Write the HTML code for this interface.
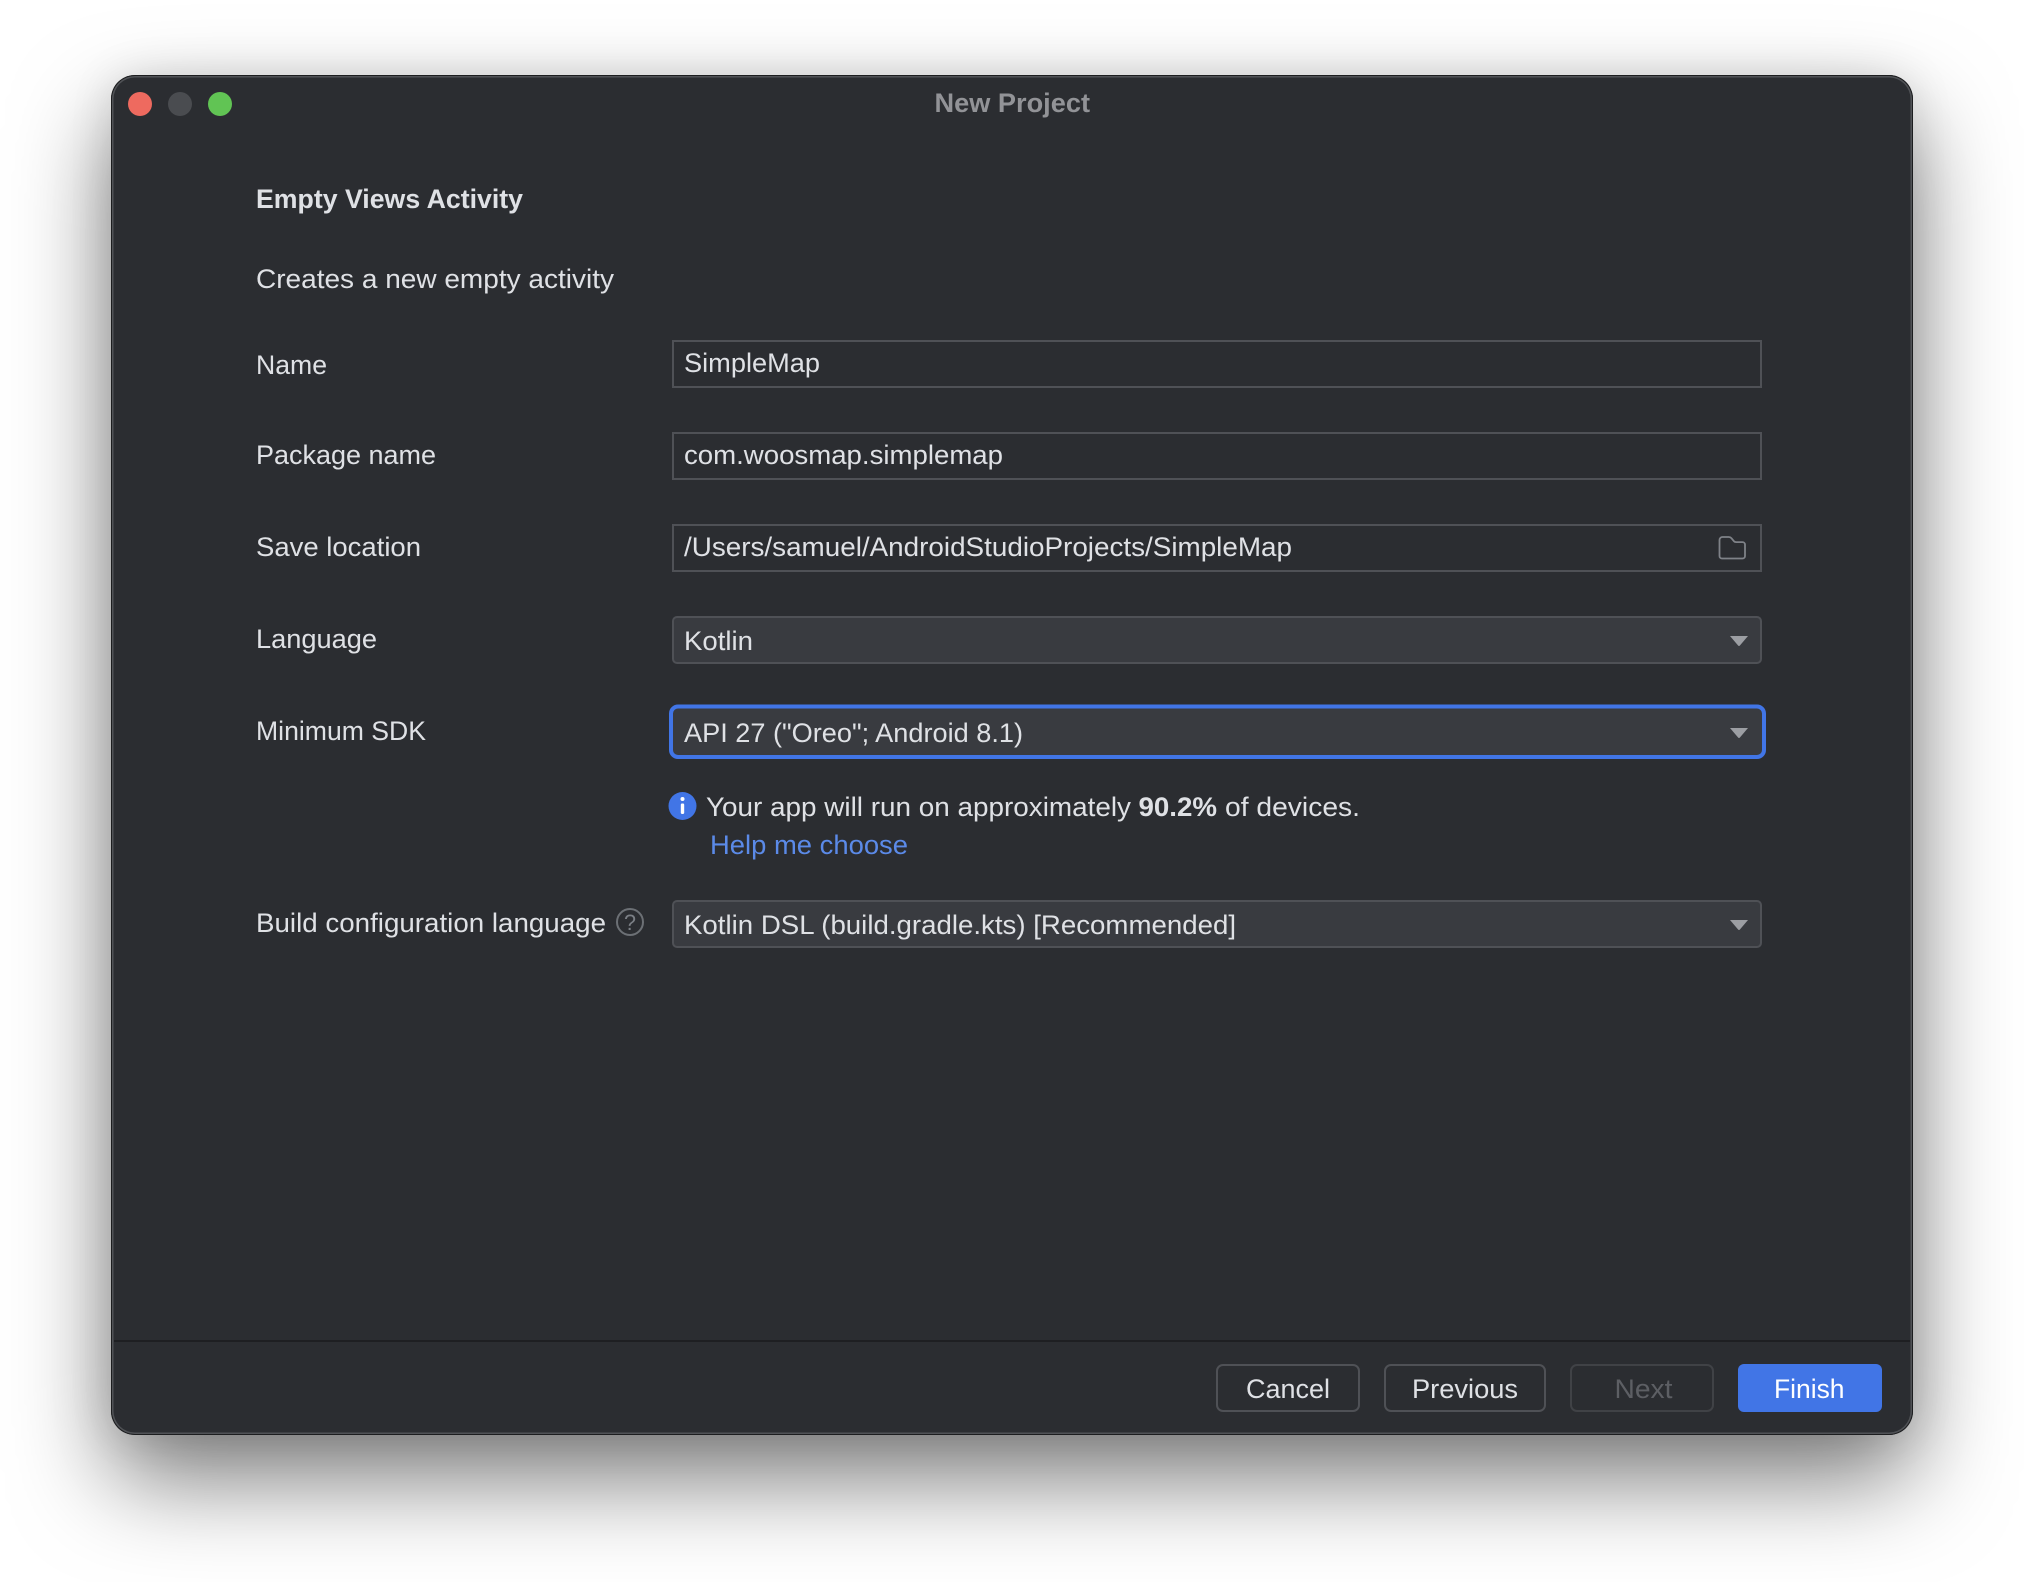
<!DOCTYPE html>
<html lang="en">
<head>
<meta charset="utf-8">
<title>New Project</title>
<style>
html,body{margin:0;padding:0;background:#fff;width:2024px;height:1582px;overflow:hidden}
.win{position:absolute;left:111px;top:75px;width:1802px;height:1360px;box-sizing:border-box;border-radius:24px;background:#2b2d31;
box-shadow:0 44px 96px rgba(0,0,0,.52),0 0 44px rgba(0,0,0,.1),inset 0 0 0 1px #1c1d1f,inset 0 0 0 2.5px #505256}
svg{position:absolute;left:0;top:0}
text{font-family:"Liberation Sans",sans-serif;font-size:27px;fill:#dfe1e5}
.b{font-weight:700}
</style>
</head>
<body>
<div class="win"></div>
<svg width="2024" height="1582" viewBox="0 0 2024 1582" xmlns="http://www.w3.org/2000/svg">
  <!-- traffic lights -->
  <ellipse cx="140" cy="104" rx="12" ry="12" fill="#ee6a5f"/>
  <ellipse cx="180" cy="104" rx="12" ry="12" fill="#4a4c50"/>
  <ellipse cx="220" cy="104" rx="12" ry="12" fill="#61c454"/>
  <text class="b" x="934.5" y="112" textLength="155.5" lengthAdjust="spacingAndGlyphs" style="fill:#929397">New Project</text>

  <text class="b" x="256" y="208" textLength="267" lengthAdjust="spacingAndGlyphs">Empty Views Activity</text>
  <text x="256" y="288" textLength="358" lengthAdjust="spacingAndGlyphs">Creates a new empty activity</text>

  <!-- labels -->
  <text x="256" y="374" textLength="71" lengthAdjust="spacingAndGlyphs">Name</text>
  <text x="256" y="464" textLength="180" lengthAdjust="spacingAndGlyphs">Package name</text>
  <text x="256" y="556" textLength="165" lengthAdjust="spacingAndGlyphs">Save location</text>
  <text x="256" y="648" textLength="121" lengthAdjust="spacingAndGlyphs">Language</text>
  <text x="256" y="740" textLength="170" lengthAdjust="spacingAndGlyphs">Minimum SDK</text>
  <text x="256" y="932" textLength="350" lengthAdjust="spacingAndGlyphs">Build configuration language</text>

  <!-- text fields -->
  <rect x="673" y="341" width="1088" height="46" fill="#2b2d31" stroke="#4f5156" stroke-width="2"/>
  <rect x="673" y="433" width="1088" height="46" fill="#2b2d31" stroke="#4f5156" stroke-width="2"/>
  <rect x="673" y="525" width="1088" height="46" fill="#2b2d31" stroke="#4f5156" stroke-width="2"/>
  <text x="684" y="372" textLength="136" lengthAdjust="spacingAndGlyphs">SimpleMap</text>
  <text x="684" y="464" textLength="319" lengthAdjust="spacingAndGlyphs">com.woosmap.simplemap</text>
  <text x="684" y="556" textLength="608" lengthAdjust="spacingAndGlyphs">/Users/samuel/AndroidStudioProjects/SimpleMap</text>
  <path d="M1719.5 540a3 3 0 0 1 3-3h6.2a3.5 3.5 0 0 1 2.7 1.2l2.4 2.9a3 3 0 0 0 2.3 1h6.4a2.5 2.5 0 0 1 2.5 2.5v11.4a2.5 2.5 0 0 1-2.5 2.5h-20.5a2.5 2.5 0 0 1-2.5-2.5z" fill="none" stroke="#7f8288" stroke-width="1.8"/>

  <!-- combos -->
  <rect x="673" y="617" width="1088" height="46" rx="4" fill="#393b40" stroke="#4f5156" stroke-width="2"/>
  <rect x="671" y="706.5" width="1093" height="50.5" rx="7" fill="#393b40" stroke="#4175e6" stroke-width="4"/>
  <rect x="673" y="901" width="1088" height="46" rx="4" fill="#393b40" stroke="#4f5156" stroke-width="2"/>
  <text x="684" y="650" textLength="69" lengthAdjust="spacingAndGlyphs">Kotlin</text>
  <text x="684" y="742" textLength="339" lengthAdjust="spacingAndGlyphs">API 27 ("Oreo"; Android 8.1)</text>
  <text x="684" y="934" textLength="552" lengthAdjust="spacingAndGlyphs">Kotlin DSL (build.gradle.kts) [Recommended]</text>
  <path d="M1730 636h18l-8.2 9.6a1 1 0 0 1-1.6 0z" fill="#9c9ea3"/>
  <path d="M1730 728h18l-8.2 9.6a1 1 0 0 1-1.6 0z" fill="#9c9ea3"/>
  <path d="M1730 920h18l-8.2 9.6a1 1 0 0 1-1.6 0z" fill="#9c9ea3"/>

  <!-- info -->
  <circle cx="682.5" cy="806" r="14" fill="#4175e6"/>
  <circle cx="682.5" cy="799" r="2" fill="#fff"/>
  <rect x="680.8" y="803.5" width="3.4" height="10.5" rx="1.2" fill="#fff"/>
  <text x="706" y="816" textLength="425" lengthAdjust="spacingAndGlyphs">Your app will run on approximately</text>
  <text class="b" x="1138.5" y="816" textLength="78.5" lengthAdjust="spacingAndGlyphs">90.2%</text>
  <text x="1225" y="816" textLength="135" lengthAdjust="spacingAndGlyphs">of devices.</text>
  <text x="710" y="854" textLength="198" lengthAdjust="spacingAndGlyphs" style="fill:#5b8ae8">Help me choose</text>

  <!-- help icon -->
  <circle cx="630" cy="922" r="13" fill="none" stroke="#6c7075" stroke-width="2"/>
  <text x="624" y="930" textLength="12" lengthAdjust="spacingAndGlyphs" style="font-size:22px;fill:#7b7f85">?</text>

  <!-- footer -->
  <rect x="114" y="1340" width="1796" height="2" fill="#1e1f22"/>
  <rect x="1217" y="1365" width="142" height="46" rx="6" fill="none" stroke="#4f5156" stroke-width="2"/>
  <rect x="1385" y="1365" width="160" height="46" rx="6" fill="none" stroke="#4f5156" stroke-width="2"/>
  <rect x="1571" y="1365" width="142" height="46" rx="6" fill="none" stroke="#404246" stroke-width="2"/>
  <rect x="1738" y="1364" width="144" height="48" rx="6" fill="#4175e6"/>
  <text x="1246" y="1398" textLength="84" lengthAdjust="spacingAndGlyphs">Cancel</text>
  <text x="1412" y="1398" textLength="106" lengthAdjust="spacingAndGlyphs">Previous</text>
  <text x="1614.5" y="1398" textLength="58" lengthAdjust="spacingAndGlyphs" style="fill:#5d5f64">Next</text>
  <text x="1774" y="1398" textLength="70.5" lengthAdjust="spacingAndGlyphs" style="fill:#fff">Finish</text>
</svg>
</body>
</html>
